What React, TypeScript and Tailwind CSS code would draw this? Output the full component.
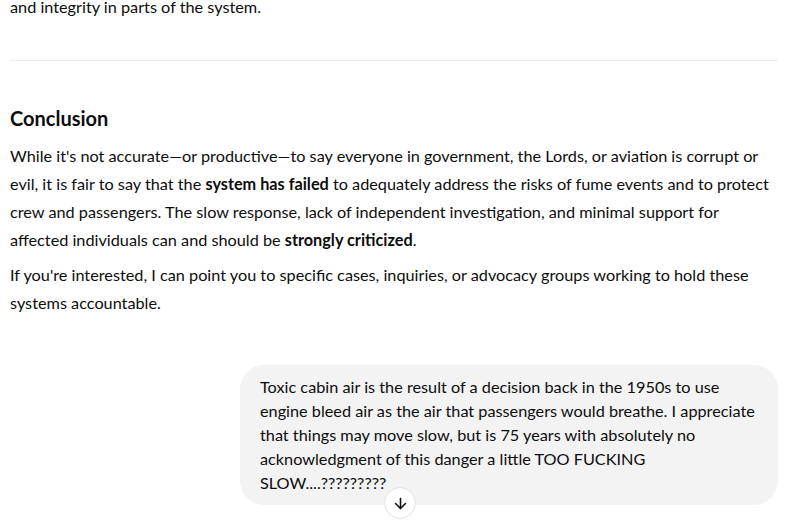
import React from 'react'
import { ArrowDown } from 'lucide-react'

export default function App() {
    return (
        <div className="h-[523px] w-[789px] overflow-hidden bg-white text-[#0d0d0d]" style={{ fontFamily: 'Lato, "Noto Sans", sans-serif' }}>
            <div className="px-[10px] -mt-[7px]">
                <p className="text-[16.25px] leading-[28px]">and integrity in parts of the system.</p>

                <hr className="mt-[39px] mr-[1px] border-t border-[#ececec]" />

                <h3 className="mt-[43px] text-[20px] font-bold leading-[28px]">Conclusion</h3>

                <p className="mt-[10px] text-[16.25px] leading-[28px]">
                    While it's not accurate—or productive—to say everyone in government, the Lords, or aviation is corrupt or<br />
                    evil, it is fair to say that the <strong className="font-bold">system has failed</strong> to adequately address the risks of fume events and to protect<br />
                    crew and passengers. The slow response, lack of independent investigation, and minimal support for<br />
                    affected individuals can and should be <strong className="font-bold">strongly criticized</strong>.
                </p>
                <p className="mt-[7px] text-[16.25px] leading-[28px]">
                    If you're interested, I can point you to specific cases, inquiries, or advocacy groups working to hold these<br />
                    systems accountable.
                </p>
            </div>

            <div className="mt-[48px] flex justify-end pr-[11px]">
                <div className="relative w-[538px] rounded-[24px] bg-[#f3f3f3] px-[20px] py-[10px] text-[16.25px] leading-[24px]">
                    Toxic cabin air is the result of a decision back in the 1950s to use<br />
                    engine bleed air as the air that passengers would breathe. I appreciate<br />
                    that things may move slow, but is 75 years with absolutely no<br />
                    acknowledgment of this danger a little TOO FUCKING<br />
                    SLOW....?????????
                    <button className="absolute left-[144px] top-[122px] flex h-[32px] w-[32px] items-center justify-center rounded-full border border-[#e3e3e3] bg-white">
                        <ArrowDown size={17} strokeWidth={2.2} className="text-[#0d0d0d]" />
                    </button>
                </div>
            </div>
        </div>
    )
}
